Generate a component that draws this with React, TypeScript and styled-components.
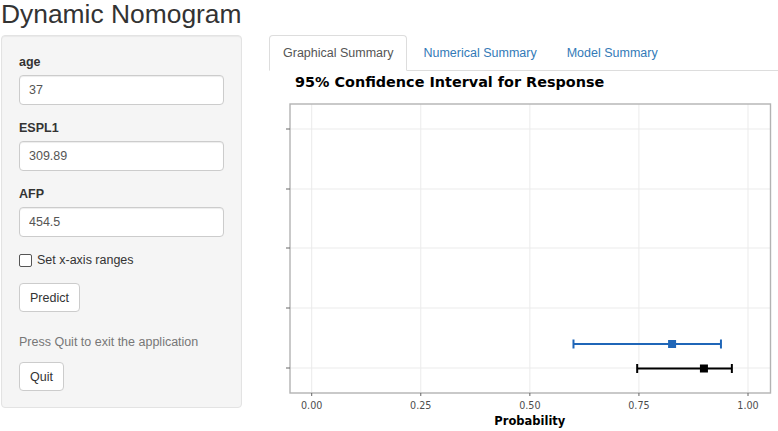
import React, { useState } from "react";
import styled, { createGlobalStyle } from "styled-components";

const GlobalStyle = createGlobalStyle`
  * { box-sizing: border-box; }
  body {
    margin: 0;
    background: #fff;
    color: #333;
    font-family: "Liberation Sans", Arial, Helvetica, sans-serif;
    font-size: 12.5px;
  }
`;

type Estimate = {
  low: number;
  mid: number;
  high: number;
  y: number;
  color: string;
};

// plot geometry (svg coordinates)
const PANEL = { left: 21, right: 501.5, top: 33, bottom: 322 };
const xpos = (v: number) => 42.7 + v * 436.3;
const gridY = [58, 118, 177, 237, 297];
const ticksX = [0, 0.25, 0.5, 0.75, 1];

const estimates: Estimate[] = [
  { low: 0.6, mid: 0.826, high: 0.938, y: 273, color: "#1f66b8" },
  { low: 0.746, mid: 0.899, high: 0.963, y: 297.5, color: "#000" },
];

const Page = styled.div`
  padding-left: 1px;
  width: 778px;
  height: 431px;
  overflow: hidden;
`;

const Title = styled.h1`
  margin: 0 0 7px;
  font-size: 26.4px;
  line-height: 28px;
  font-weight: 400;
  color: #333;
`;

const Layout = styled.div`
  display: flex;
  align-items: flex-start;
`;

const Well = styled.div`
  width: 241px;
  flex-shrink: 0;
  padding: 17px 17px 16px;
  background: #f5f5f5;
  border: 1px solid #e3e3e3;
  border-radius: 4px;
  box-shadow: inset 0 1px 1px rgba(0, 0, 0, 0.05);
`;

const Field = styled.div`
  margin-bottom: 14px;
`;

const Label = styled.label`
  display: block;
  font-weight: 700;
  line-height: 18px;
  margin-bottom: 4px;
  color: #333;
`;

const TextInput = styled.input`
  display: block;
  width: 100%;
  height: 30px;
  padding: 0 9px;
  font: inherit;
  color: #555;
  background: #fff;
  border: 1px solid #ccc;
  border-radius: 4px;
  box-shadow: inset 0 1px 1px rgba(0, 0, 0, 0.075);
  outline: none;
`;

const CheckRow = styled.label`
  display: flex;
  align-items: center;
  gap: 5px;
  height: 18px;
  margin-bottom: 14px;
  color: #333;
`;

const Check = styled.input`
  appearance: none;
  width: 13px;
  height: 13px;
  margin: 1px 0 0;
  border: 1px solid #555;
  border-radius: 2px;
  background: #fff;
`;

const Button = styled.button`
  display: block;
  height: 29px;
  padding: 0 10px;
  font: inherit;
  color: #333;
  background: #fff;
  border: 1px solid #ccc;
  border-radius: 4px;
`;

const Help = styled.p`
  margin: 21px 0 11px;
  line-height: 18px;
  color: #777;
`;

const Main = styled.div`
  flex: 1;
  margin-left: 27px;
`;

const Tabs = styled.ul`
  display: flex;
  margin: 0;
  padding: 0;
  list-style: none;
  border-bottom: 1px solid #ddd;
`;

const Tab = styled.li<{ $active?: boolean }>`
  margin: 0 2px -1px 0;
  padding: 9px 13px 8px;
  line-height: 17px;
  border: 1px solid ${(p) => (p.$active ? "#ddd" : "transparent")};
  border-bottom-color: transparent;
  border-radius: 4px 4px 0 0;
  background: ${(p) => (p.$active ? "#fff" : "transparent")};
  color: ${(p) => (p.$active ? "#555" : "#337ab7")};
  cursor: pointer;
`;

const Chart = styled.svg`
  display: block;
  font-family: "DejaVu Sans", Verdana, sans-serif;
`;

const ConfidencePlot = () => (
  <Chart width={509} height={360} viewBox="0 0 509 360">
    <text x={26} y={16} fontSize={14.4} fontWeight={700} fill="#000">
      95% Confidence Interval for Response
    </text>

    {gridY.map((y) => (
      <line key={"h" + y} x1={PANEL.left} x2={PANEL.right} y1={y} y2={y} stroke="#ebebeb" strokeWidth={1} />
    ))}
    {ticksX.map((v) => (
      <line key={"v" + v} x1={xpos(v)} x2={xpos(v)} y1={PANEL.top} y2={PANEL.bottom} stroke="#ebebeb" strokeWidth={1} />
    ))}

    <rect
      x={PANEL.left}
      y={PANEL.top}
      width={PANEL.right - PANEL.left}
      height={PANEL.bottom - PANEL.top}
      fill="none"
      stroke="#b3b3b3"
      strokeWidth={1.4}
    />

    {gridY.map((y) => (
      <line key={"ty" + y} x1={17} x2={PANEL.left} y1={y} y2={y} stroke="#666" strokeWidth={1} />
    ))}
    {ticksX.map((v) => (
      <g key={"tx" + v}>
        <line x1={xpos(v)} x2={xpos(v)} y1={PANEL.bottom} y2={PANEL.bottom + 3} stroke="#666" strokeWidth={1} />
        <text x={xpos(v)} y={338} fontSize={9.6} fill="#4d4d4d" textAnchor="middle">
          {v.toFixed(2)}
        </text>
      </g>
    ))}

    {estimates.map((e) => (
      <g key={e.y} stroke={e.color} strokeWidth={2}>
        <line x1={xpos(e.low)} x2={xpos(e.high)} y1={e.y} y2={e.y} />
        <line x1={xpos(e.low)} x2={xpos(e.low)} y1={e.y - 4.5} y2={e.y + 4.5} />
        <line x1={xpos(e.high)} x2={xpos(e.high)} y1={e.y - 4.5} y2={e.y + 4.5} />
        <rect x={xpos(e.mid) - 4} y={e.y - 4} width={8} height={8} fill={e.color} stroke="none" />
      </g>
    ))}

    <text x={xpos(0.5)} y={354} fontSize={11.5} fontWeight={700} fill="#000" textAnchor="middle">
      Probability
    </text>
  </Chart>
);

const tabNames = ["Graphical Summary", "Numerical Summary", "Model Summary"];

export default function App() {
  const [tab, setTab] = useState(0);
  const [age, setAge] = useState("37");
  const [espl1, setEspl1] = useState("309.89");
  const [afp, setAfp] = useState("454.5");

  return (
    <Page>
      <GlobalStyle />
      <Title>Dynamic Nomogram</Title>
      <Layout>
        <Well>
          <Field>
            <Label htmlFor="age">age</Label>
            <TextInput id="age" value={age} onChange={(e) => setAge(e.target.value)} />
          </Field>
          <Field>
            <Label htmlFor="espl1">ESPL1</Label>
            <TextInput id="espl1" value={espl1} onChange={(e) => setEspl1(e.target.value)} />
          </Field>
          <Field>
            <Label htmlFor="afp">AFP</Label>
            <TextInput id="afp" value={afp} onChange={(e) => setAfp(e.target.value)} />
          </Field>
          <CheckRow>
            <Check type="checkbox" />
            Set x-axis ranges
          </CheckRow>
          <Button>Predict</Button>
          <Help>Press Quit to exit the application</Help>
          <Button>Quit</Button>
        </Well>
        <Main>
          <Tabs>
            {tabNames.map((name, i) => (
              <Tab key={name} $active={i === tab} onClick={() => setTab(i)}>
                {name}
              </Tab>
            ))}
          </Tabs>
          {tab === 0 && <ConfidencePlot />}
        </Main>
      </Layout>
    </Page>
  );
}
